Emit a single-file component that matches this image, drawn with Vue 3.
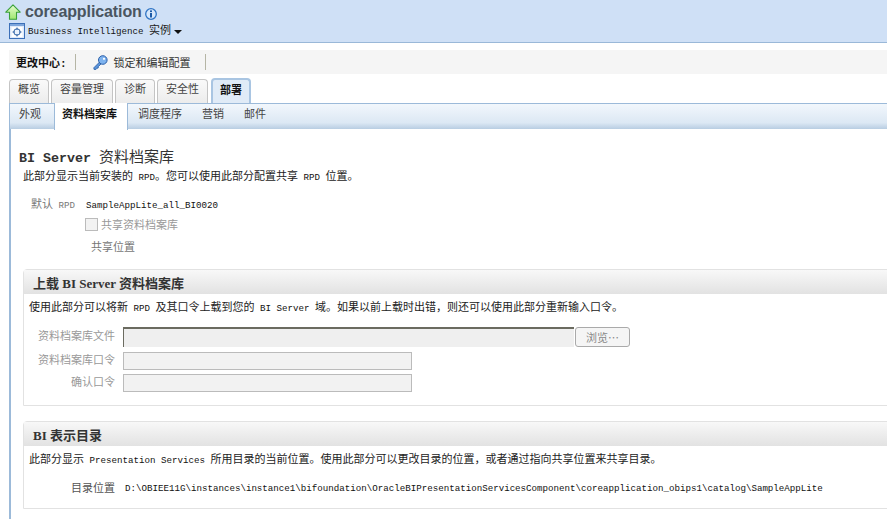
<script setup>
const tabs = [
  { label: '概览' },
  { label: '容量管理' },
  { label: '诊断' },
  { label: '安全性' },
  { label: '部署', active: true }
]
const subtabs = [
  { label: '外观' },
  { label: '资料档案库', active: true },
  { label: '调度程序' },
  { label: '营销' },
  { label: '邮件' }
]
</script>

<template>
  <div class="page">
    <header class="head">
      <div class="title-row">
        <svg class="up" width="16" height="16" viewBox="0 0 16 16">
          <defs><linearGradient id="upg" x1="0" y1="0" x2="0" y2="1"><stop offset="0" stop-color="#e6fbd0"/><stop offset="1" stop-color="#9fe86f"/></linearGradient></defs>
          <path d="M8 0.8 L15.2 8.2 H11.5 V15.2 H4.5 V8.2 H0.8 Z" fill="url(#upg)" stroke="#3aa03a" stroke-width="1.1" stroke-linejoin="round"/>
        </svg>
        <span class="title">coreapplication</span>
        <svg class="info" width="12" height="12" viewBox="0 0 12 12"><circle cx="6" cy="6" r="5.3" fill="#d6e7fb" stroke="#2f74c4" stroke-width="1.3"/><rect x="5" y="2.4" width="2" height="1.7" fill="#1c5aa6"/><rect x="5" y="5" width="2" height="4.5" fill="#1c5aa6"/></svg>
      </div>
      <div class="type-row">
        <svg width="16" height="16" viewBox="0 0 16 16"><rect x="0.5" y="0.5" width="15" height="15" fill="#dfeafa" stroke="#3b6fb8"/><rect x="1" y="1" width="14" height="2" fill="#7ea6dc"/><rect x="2.5" y="4" width="11" height="10" fill="#fff"/><circle cx="8" cy="9" r="3.2" fill="#eaf2fc" stroke="#2f62a6"/><path d="M8 4.5v2.4M8 11.1v2.4M3.5 9h2.4M10.1 9h2.4" stroke="#2f62a6"/></svg>
        <span class="type-text"><span class="l">Business Intelligence</span> 实例</span>
        <span class="caret"></span>
      </div>
    </header>

    <div class="change-bar">
      <b class="cc">更改中心:</b>
      <span class="sep"></span>
      <svg class="key" width="15" height="15" viewBox="0 0 15 15"><path d="M6.6 7 L0.8 12.8 L1 14.4 L3 14.4 L4 13.2 L5.2 13 L5.4 11.6 L8 9" fill="#5b93d8" stroke="#2a5ea8" stroke-width="0.8"/><circle cx="9.8" cy="5" r="4.3" fill="#7db2ee" stroke="#2a5ea8"/><circle cx="11" cy="3.8" r="1.1" fill="#fff"/></svg>
      <span class="lock">锁定和编辑配置</span>
      <span class="sep sep2"></span>
    </div>

    <nav class="tabs">
      <span v-for="t in tabs" :key="t.label" class="tab" :class="{ on: t.active }">{{ t.label }}</span>
    </nav>

    <nav class="subtabs">
      <span v-for="t in subtabs" :key="t.label" class="sub" :class="{ on: t.active }">{{ t.label }}</span>
    </nav>

    <main class="content">
      <h1 class="h1"><span class="l1">BI Server</span> 资料档案库</h1>
      <p class="lead">此部分显示当前安装的 <span class="l">RPD</span>。您可以使用此部分配置共享 <span class="l">RPD</span> 位置。</p>

      <div class="def-row">
        <span class="muted">默认 <span class="l lm">RPD</span></span>
        <span class="val l">SampleAppLite_all_BI0020</span>
      </div>
      <label class="check-row">
        <span class="check"></span>
        <span class="dim">共享资料档案库</span>
      </label>
      <div class="share muted">共享位置</div>

      <section class="panel first">
        <h2 class="ph"><span>上载 BI Server 资料档案库</span></h2>
        <p class="pd">使用此部分可以将新 <span class="l">RPD</span> 及其口令上载到您的 <span class="l">BI Server</span> 域。如果以前上载时出错，则还可以使用此部分重新输入口令。</p>
        <div class="form">
          <div class="fr r1">
            <span class="fl">资料档案库文件</span>
            <span class="file"></span>
            <span class="btn">浏览…</span>
          </div>
          <div class="fr r2">
            <span class="fl">资料档案库口令</span>
            <span class="inp"></span>
          </div>
          <div class="fr r3">
            <span class="fl">确认口令</span>
            <span class="inp"></span>
          </div>
        </div>
      </section>

      <section class="panel second">
        <h2 class="ph"><span>BI 表示目录</span></h2>
        <p class="pd">此部分显示 <span class="l">Presentation Services</span> 所用目录的当前位置。使用此部分可以更改目录的位置，或者通过指向共享位置来共享目录。</p>
        <div class="loc">
          <span class="loc-l">目录位置</span>
          <span class="l">D:\OBIEE11G\instances\instance1\bifoundation\OracleBIPresentationServicesComponent\coreapplication_obips1\catalog\SampleAppLite</span>
        </div>
      </section>
    </main>
  </div>
</template>

<style>
html, body { margin: 0; background: #fff; overflow: hidden; }
</style>

<style scoped>
.page {
  width: 887px;
  height: 519px;
  overflow: hidden;
  font-family: "Liberation Mono", "Noto Sans CJK SC", monospace;
  font-size: 11px;
  word-spacing: -1.1px;
  color: #222;
  background: #fff;
}
.l { font-family: "Liberation Mono", monospace; font-size: 9.17px; word-spacing: 0; color: #111; }
.lm { color: #777; }
.l1 { font-family: "Liberation Mono", monospace; font-size: 13.33px; font-weight: 700; word-spacing: 0; }
.head {
  height: 42px;
  background: #cfe0f6;
  border-bottom: 1px solid #9ab8d8;
  box-sizing: content-box;
  padding-left: 5px;
}
.title-row { display: flex; align-items: center; height: 21px; padding-top: 1px; }
.up { margin-right: 4px; }
.title {
  font: 700 16px/21px "Liberation Sans", sans-serif;
  color: #4a5560;
  letter-spacing: -0.1px;
}
.info { margin: 5px 0 0 3px; }
.type-row { display: flex; align-items: center; height: 17px; padding-left: 4px; }
.type-text { margin-left: 3px; height: 16px; line-height: 16px; color: #222; }
.caret {
  margin: 3px 0 0 3px;
  border: 4px solid transparent;
  border-top-color: #111;
  border-bottom: 0;
}
.change-bar {
  margin: 7px 0 0 9px;
  height: 24px;
  background: #f5f5f5;
  display: flex;
  align-items: center;
  padding-left: 7px;
}
.cc { color: #111; }
.sep { width: 1px; height: 16px; background: #b5b5a5; margin-left: 8px; }
.key { margin-left: 17px; }
.lock { margin-left: 6px; color: #333; }
.sep2 { margin-left: 14px; }
.tabs { display: flex; margin: 5px 0 0 9px; height: 24px; gap: 2px; }
.tab {
  box-sizing: border-box;
  border: 1px solid #c4c4c4;
  border-bottom: 0;
  border-radius: 4px 4px 0 0;
  background: linear-gradient(#fafafa, #ececec);
  color: #444;
  line-height: 21px;
  height: 24px;
  padding: 0 8px;
}
.tab.on {
  margin: -1px 0 0 1px;
  height: 25px;
  padding: 0 7px;
  border: 2px solid #a9c5e2;
  border-bottom: 0;
  background: #e0ebf7;
  color: #111;
  font-weight: 700;
  line-height: 22px;
}
.subtabs {
  display: flex;
  margin-left: 9px;
  height: 26px;
  box-sizing: border-box;
  border-top: 1px solid #9cbad9;
  background: linear-gradient(#f2f7fc, #dce8f4 75%, #b8cde2);
  border-left: 1px solid #9cbad9;
}
.sub { height: 24px; line-height: 23px; color: #444; margin-right: 20px; }
.sub:first-child { margin-left: 9px; margin-right: 13px; }
.sub.on {
  background: #fff;
  margin: -1px 10px 0 0;
  padding: 1px 10px 0 7px;
  height: 26px;
  font-weight: 700;
  color: #111;
  border-left: 1px solid #9cbad9;
  border-right: 1px solid #9cbad9;
}
.content {
  margin-left: 9px;
  border-left: 2px solid #9cbad9;
  height: 390px;
  box-sizing: border-box;
  padding-left: 8px;
}
.h1 {
  margin: 0;
  padding-top: 21px;
  height: 18px;
  font-size: 15px;
  line-height: 18px;
  font-weight: 400;
  color: #333;
  word-spacing: -1px;
}
.lead { margin: 1px 0 0 4px; height: 16px; line-height: 16px; color: #222; }
.def-row { display: flex; height: 15px; margin: 13px 0 0 12px; line-height: 15px; }
.muted { color: #777; height: 15px; }
.dim { color: #999; }
.val { margin-left: 11px; }
.check-row { display: flex; align-items: center; margin: 3px 0 0 66px; height: 16px; }
.check {
  width: 11px;
  height: 11px;
  border: 1px solid #bbb;
  background: #f2f2f2;
  margin-right: 3px;
}
.share { margin: 8px 0 0 72px; height: 16px; line-height: 16px; }
.panel {
  margin-left: 4px;
  width: 900px;
  border: 1px solid #e2e2e2;
  border-radius: 4px 0 0 0;
  box-sizing: border-box;
}
.first { margin-top: 13px; height: 137px; }
.second { margin-top: 15px; height: 88px; }
.ph {
  margin: 0;
  height: 24px;
  background: linear-gradient(#f8f8f8, #e2e2e2);
  padding-left: 9px;
  font: 700 13px/27px "Liberation Serif", "Noto Sans CJK SC", serif;
  color: #333;
  word-spacing: 0;
}
.pd { margin: 0; padding: 2px 0 0 5px; height: 22px; line-height: 24px; color: #222; white-space: nowrap; }
.form { padding-top: 9px; }
.fr { display: flex; align-items: center; }
.fl { width: 91px; text-align: right; margin-right: 8px; color: #999; height: 16px; line-height: 16px; }
.r1 { height: 20px; }
.r2 { height: 18px; margin-top: 5px; }
.r3 { height: 18px; margin-top: 4px; }
.file {
  box-sizing: border-box;
  width: 451px;
  height: 20px;
  background: #efefef;
  border-top: 2px solid #6b6b60;
  border-left: 1px solid #6b6b60;
}
.btn {
  box-sizing: border-box;
  margin-left: 1px;
  width: 55px;
  height: 20px;
  border: 1px solid #aaa;
  border-radius: 3px;
  background: #f5f5f5;
  color: #888;
  text-align: center;
  font-family: "Noto Sans CJK SC", sans-serif;
  line-height: 18px;
}
.inp {
  box-sizing: border-box;
  width: 289px;
  height: 18px;
  background: #f2f2f2;
  border: 1px solid #bbb;
}
.loc { display: flex; margin-top: 11px; height: 16px; line-height: 16px; white-space: nowrap; }
.loc-l { width: 91px; text-align: right; margin-right: 10px; color: #555; }
</style>
